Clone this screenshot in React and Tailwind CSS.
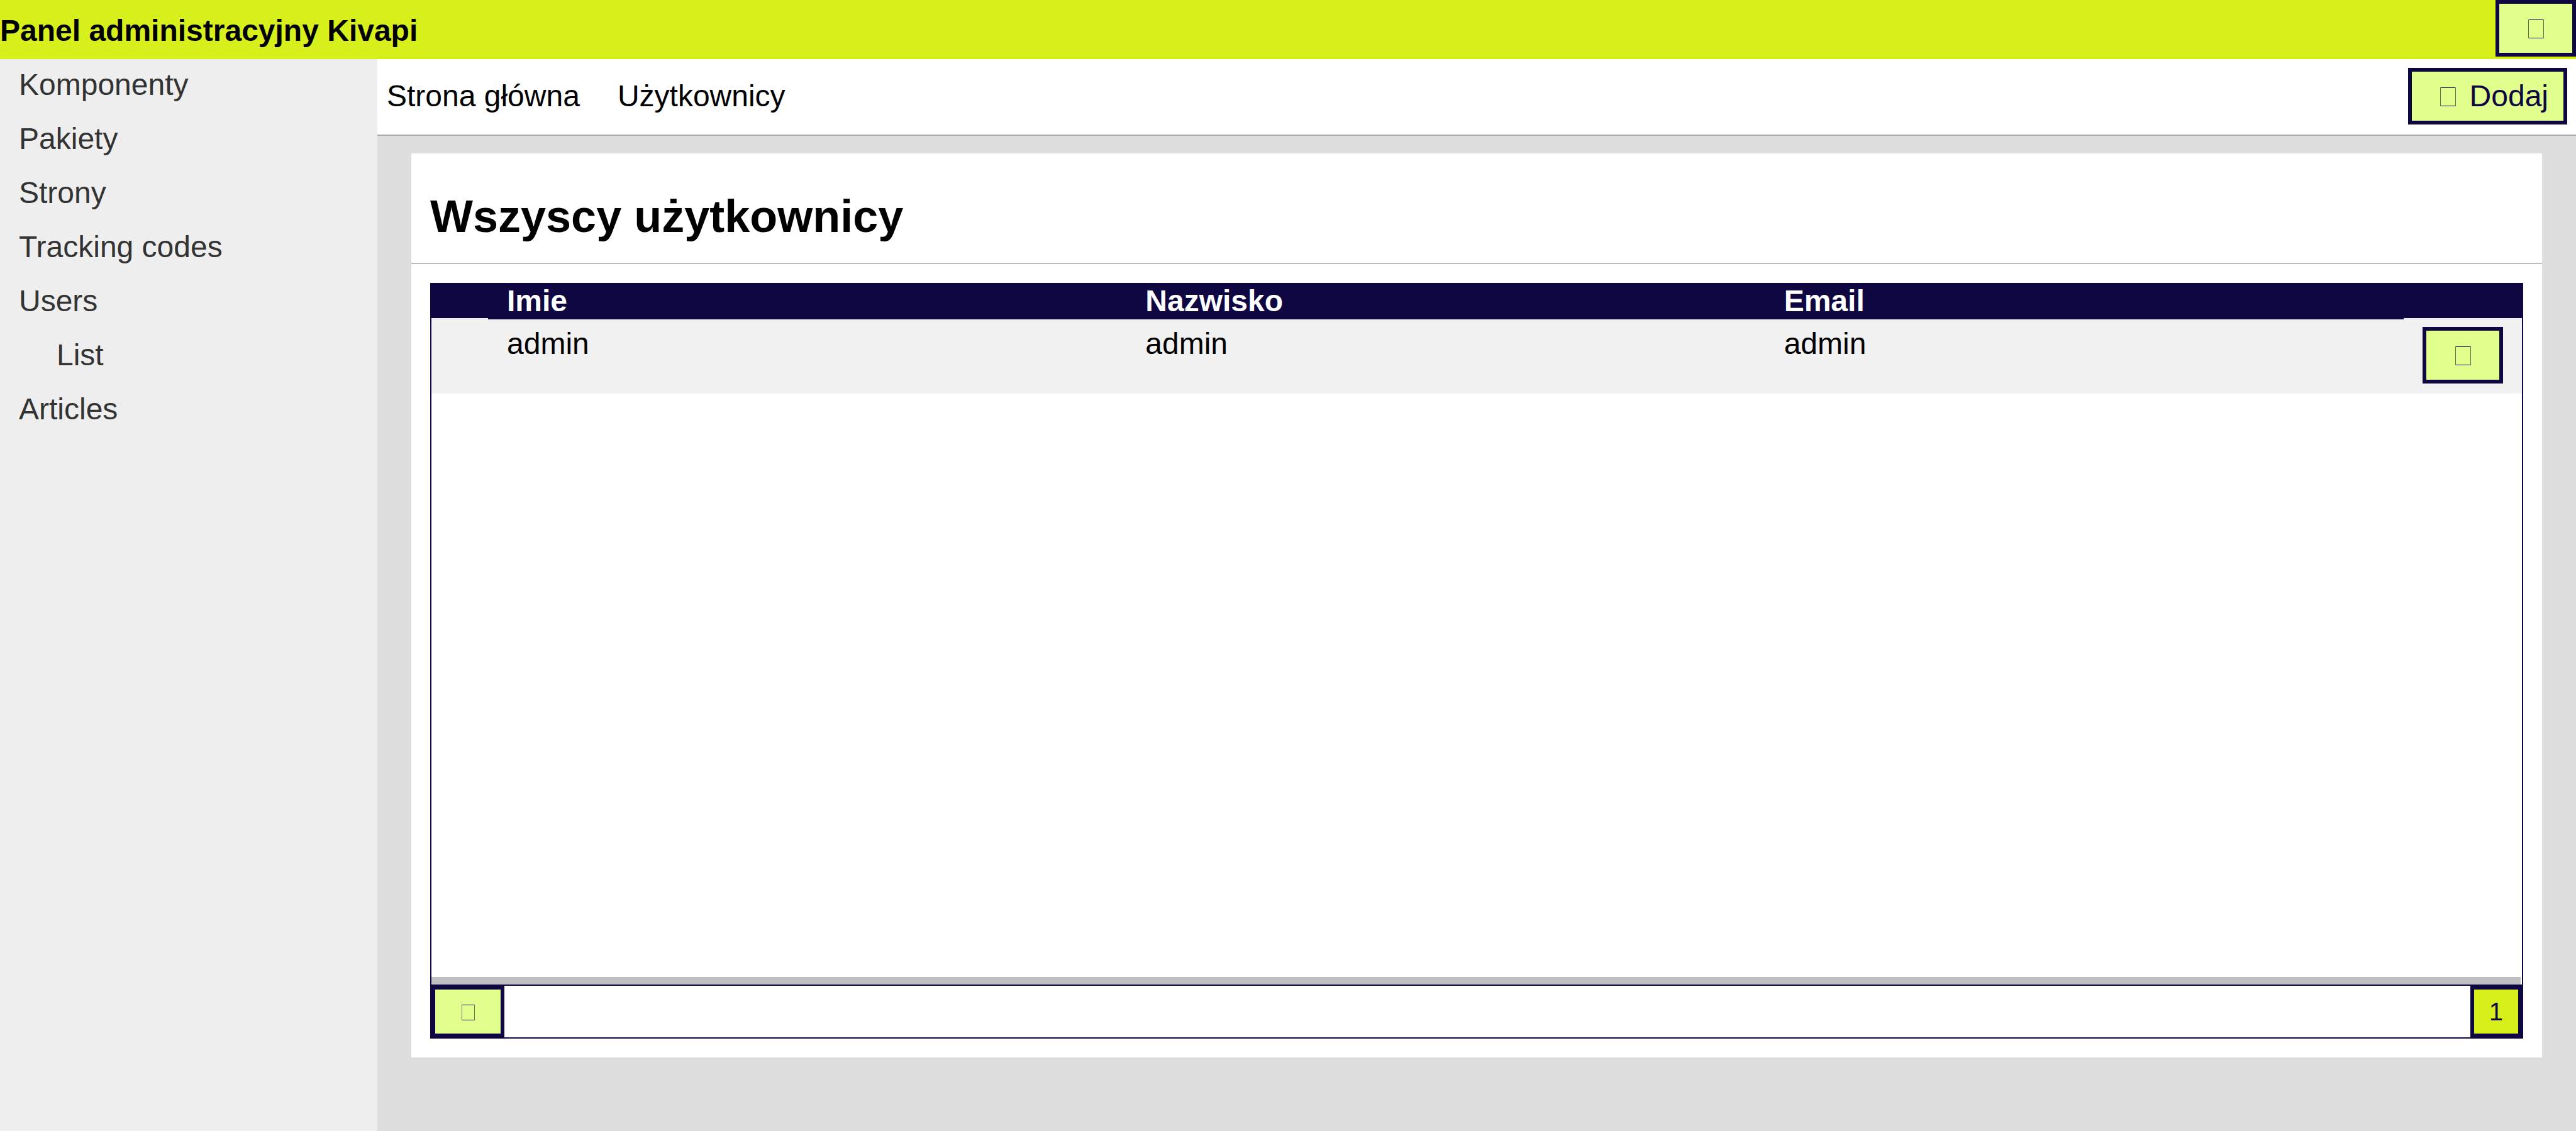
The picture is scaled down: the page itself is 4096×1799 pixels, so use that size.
const menu = [
  { label: "Komponenty" },
  { label: "Pakiety" },
  { label: "Strony" },
  { label: "Tracking codes" },
  { label: "Users", children: ["List"] },
  { label: "Articles" },
];

const columns = ["Imie", "Nazwisko", "Email"];
const rows = [["admin", "admin", "admin"]];

function BoxGlyph({ small = false }) {
  return (
    <span
      className={
        small
          ? "inline-flex w-14 justify-center align-baseline"
          : "inline-flex w-17 justify-center align-baseline"
      }
      aria-hidden="true"
    >
      <svg
        viewBox="0 0 25 30"
        preserveAspectRatio="none"
        className={small ? "h-[25px] w-[21px]" : "h-[30px] w-[25px]"}
        fill="none"
        stroke="currentColor"
        shapeRendering="crispEdges"
      >
        <path d="M0.5 0V30M24.5 0V30" strokeOpacity="0.6" vectorEffect="non-scaling-stroke" />
        <path d="M1 0.5H24M1 29.5H24" vectorEffect="non-scaling-stroke" />
      </svg>
    </span>
  );
}

function ActionButton({ label, children }) {
  return (
    <button
      type="button"
      aria-label={label}
      className="shrink-0 border-6 border-[#0e0742] bg-[#e0ff8c] px-6 py-3 text-[#0e0742]"
    >
      <BoxGlyph />
      {children}
    </button>
  );
}

function Sidebar() {
  return (
    <nav className="w-[600px] shrink-0 bg-[#eeeeee] text-[#333333]">
      <ul>
        {menu.map((item) => (
          <li key={item.label}>
            <a href="#" className="block px-[30px] pt-3.5 pb-4.5">
              {item.label}
            </a>
            {item.children && (
              <ul className="pl-[60px]">
                {item.children.map((child) => (
                  <li key={child}>
                    <a href="#" className="block px-[30px] pt-3.5 pb-4.5">
                      {child}
                    </a>
                  </li>
                ))}
              </ul>
            )}
          </li>
        ))}
      </ul>
    </nav>
  );
}

function UsersTable() {
  return (
    <div className="mx-[30px] mt-[30px] mb-[30px] flex flex-1 flex-col border-2 border-[#0e0742]">
      <table className="w-full table-fixed border-separate border-spacing-0 text-left">
        <colgroup>
          <col className="w-[90px]" />
          <col />
          <col />
          <col />
          <col className="w-[188px]" />
        </colgroup>
        <thead className="bg-[#0e0742] text-white">
          <tr>
            <td />
            {columns.map((name) => (
              <th key={name} scope="col" className="px-[30px] py-0 font-bold">
                {name}
              </th>
            ))}
            <td />
          </tr>
        </thead>
        <tbody>
          {rows.map((row, index) => (
            <tr key={index} className="bg-[#f1f1f1] align-top">
              <td />
              {row.map((value, cell) => (
                <td key={cell} className="border-t-2 border-[#0e0742] px-[30px] pt-3">
                  {value}
                </td>
              ))}
              <td className="px-[30px] pt-3.5 pb-4">
                <div className="flex">
                  <ActionButton label="Edytuj" />
                </div>
              </td>
            </tr>
          ))}
        </tbody>
      </table>
      <div className="flex-1" />
      <div className="mr-0.5 h-3 bg-[#c0c0c0]" />
      <div className="flex justify-between border-t-2 border-[#0e0742] text-[40px] leading-[46px] text-[#0e0742]">
        <button
          type="button"
          aria-label="Odśwież"
          className="border-6 border-[#0e0742] bg-[#e0ff8c] px-6 py-3"
        >
          <BoxGlyph small />
        </button>
        <button type="button" className="border-6 border-[#0e0742] bg-[#d7ef1a] px-6 py-3">
          1
        </button>
      </div>
    </div>
  );
}

export default function App() {
  return (
    <div className="flex min-h-screen flex-col bg-[#dddddd] font-['Liberation_Sans',Arial,sans-serif] text-[48px] leading-[54px] text-black">
      <header className="flex items-start justify-between bg-[#d7ef1a] pb-1">
        <div className="pt-[22px] font-bold">Panel administracyjny Kivapi</div>
        <ActionButton label="Wyloguj" />
      </header>
      <div className="flex flex-1">
        <Sidebar />
        <main className="flex min-w-0 flex-1 flex-col">
          <div className="flex items-center justify-between border-b-2 border-[#aaaaaa] bg-white pt-3.5 pr-3.5 pb-4 pl-[15px]">
            <div className="flex gap-[60px]">
              <a href="#">Strona główna</a>
              <a href="#">Użytkownicy</a>
            </div>
            <ActionButton>Dodaj</ActionButton>
          </div>
          <section className="mx-[54px] mt-7 mb-[117px] flex flex-1 flex-col bg-white">
            <h1 className="border-b-2 border-[#bbbbbb] px-[30px] pt-[58px] pb-8 text-[72px] leading-[84px] font-bold">
              Wszyscy użytkownicy
            </h1>
            <UsersTable />
          </section>
        </main>
      </div>
    </div>
  );
}
